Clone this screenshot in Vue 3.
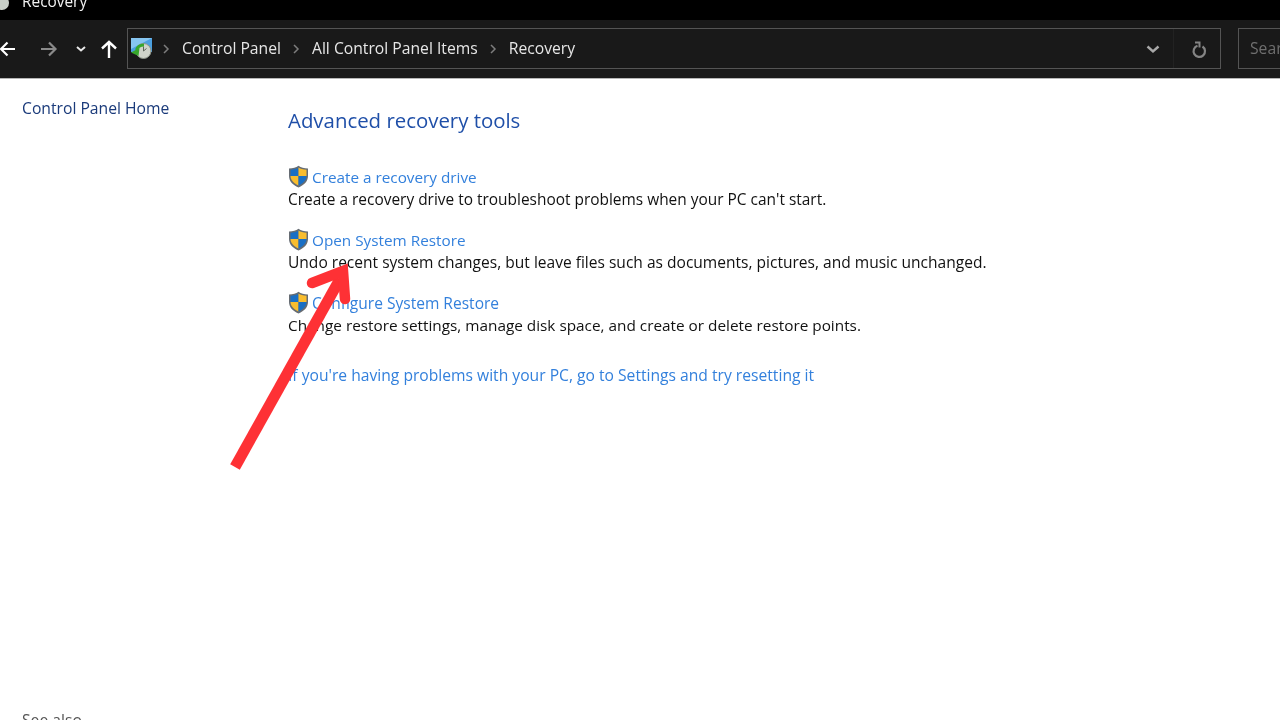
<script setup>
const tasks = [
  { link: 'Create a recovery drive', desc: "Create a recovery drive to troubleshoot problems when your PC can't start." },
  { link: 'Open System Restore', desc: 'Undo recent system changes, but leave files such as documents, pictures, and music unchanged.' },
  { link: 'Configure System Restore', desc: 'Change restore settings, manage disk space, and create or delete restore points.' },
]
const crumbs = ['Control Panel', 'All Control Panel Items', 'Recovery']
</script>

<template>
  <div class="page">
    <div class="titlebar">
      <svg class="title-icon" width="16" height="16" viewBox="0 0 16 16"><circle cx="8" cy="8" r="7" fill="#c9cfc8"/><path d="M2 9a4 4 0 0 1 4-3v3z" fill="#6f9a68"/></svg>
      <span class="title-text">Recovery</span>
    </div>
    <div class="toolbar">
      <div class="nav">
        <svg class="nav-back" width="20" height="20" viewBox="0 0 20 20"><path d="M17 10H3M9.500 3.500 3 10l6.500 6.500" fill="none" stroke="#fff" stroke-width="2.200"/></svg>
        <svg class="nav-fwd" width="20" height="20" viewBox="0 0 20 20"><path d="M2 10h14M10 3.500 16.500 10 10 16.500" fill="none" stroke="#8a8a8a" stroke-width="2.200"/></svg>
        <svg class="nav-drop" width="12" height="12" viewBox="0 0 12 12"><path d="M2 4l4 3.500L10 4" fill="none" stroke="#e8e8e8" stroke-width="2"/></svg>
        <svg class="nav-up" width="20" height="20" viewBox="0 0 20 20"><path d="M10 19V3M3 9.500 10 3l7 6.500" fill="none" stroke="#fff" stroke-width="2.400"/></svg>
      </div>
      <div class="address">
        <svg class="addr-icon" width="24" height="22" viewBox="0 0 24 22">
          <rect x="1" y="0" width="21" height="14" fill="#4b9fe0"/>
          <path d="M1 0h21L1 11z" fill="#86c5f0"/>
          <circle cx="13.500" cy="13" r="7.500" fill="#cfd3c9" stroke="#8d9488"/>
          <path d="M13.500 8.500V13l3-2.500" fill="none" stroke="#5d645a" stroke-width="1"/>
          <path d="M6.500 12C7.500 8.500 10 7 14 7" fill="none" stroke="#37a62c" stroke-width="3"/>
          <path d="M1 14.500 9.500 10 8.500 18z" fill="#37a62c"/>
        </svg>
        <template v-for="c in crumbs" :key="c">
          <svg class="sep" width="8" height="10" viewBox="0 0 8 10"><path d="M2 1l4 4-4 4" fill="none" stroke="#7d7d7d" stroke-width="1.500"/></svg>
          <span class="crumb">{{ c }}</span>
        </template>
        <span class="spacer"></span>
        <svg class="addr-drop" width="16" height="12" viewBox="0 0 16 12"><path d="M2.500 3.500 8 8.500l5.500-5" fill="none" stroke="#a8a8a8" stroke-width="2.400"/></svg>
        <span class="divider"></span>
        <svg class="refresh" width="18" height="18" viewBox="0 0 18 18"><path d="M7.500 4.800A5.700 5.700 0 1 0 12.500 5.500" fill="none" stroke="#858585" stroke-width="2.200"/><path d="M5 1.500h4.500v5" fill="none" stroke="#858585" stroke-width="2"/></svg>
      </div>
      <div class="search"><span>Search Control Panel</span></div>
    </div>
    <div class="body">
      <aside class="side">
        <a class="home">Control Panel Home</a>
        <span class="see">See also</span>
      </aside>
      <main class="main">
        <h1 class="heading">Advanced recovery tools</h1>
        <div class="tasks">
          <div v-for="t in tasks" :key="t.link" class="task">
            <div class="task-head">
              <svg class="shield" width="21" height="23" viewBox="0 0 21 23">
                <path d="M10.500.8C8 2.600 5 3.400 1 3.500V11c0 5 3.500 9 9.500 11.500C16.500 20 20 16 20 11V3.500c-4-.1-7-.9-9.500-2.700z" fill="#666c73"/>
                <path d="M10.500 2.500C8.500 3.900 6 4.500 2.500 4.700V11h8z" fill="#1a6fc4"/>
                <path d="M10.500 2.500c2 1.400 4.500 2 8 2.200V11h-8z" fill="#f9bd2e"/>
                <path d="M2.500 11h8v9.500C6 18.500 2.500 15 2.500 11z" fill="#f9bd2e"/>
                <path d="M18.500 11h-8v9.500c4.500-2 8-5.500 8-9.500z" fill="#1a6fc4"/>
              </svg>
              <a class="link">{{ t.link }}</a>
            </div>
            <p class="desc">{{ t.desc }}</p>
          </div>
        </div>
        <a class="link reset">If you're having problems with your PC, go to Settings and try resetting it</a>
      </main>
    </div>
    <svg class="arrow" width="130" height="215" viewBox="0 0 130 215">
      <path d="M9 208 114 20" fill="none" stroke="#fe3135" stroke-width="11"/>
      <path d="M86 24l31-12 2 28" fill="none" stroke="#fe3135" stroke-width="10.500" stroke-linecap="round" stroke-linejoin="miter"/>
    </svg>
  </div>
</template>

<style scoped>
.page {
  position: relative;
  width: 1280px;
  height: 720px;
  overflow: hidden;
  background: #fff;
  display: flex;
  flex-direction: column;
  font-family: "Open Sans", "Noto Sans", sans-serif;
  filter: blur(0.35px);
}
.titlebar {
  height: 20px;
  background: #000;
  display: flex;
  align-items: flex-end;
  gap: 12px;
  overflow: hidden;
  flex: none;
}
.title-icon { margin-left: -6px; margin-bottom: 9px; flex: none; }
.title-text {
  color: #f2f2f2;
  font-size: 15.400px;
  line-height: 20px;
  margin-bottom: 8px;
}
.toolbar {
  height: 57px;
  padding-bottom: 1px;
  background: #191919;
  border-bottom: 1px solid #b5b5b5;
  box-sizing: content-box;
  display: flex;
  align-items: center;
  flex: none;
}
.nav {
  width: 127px;
  display: flex;
  align-items: center;
  flex: none;
  height: 100%;
}
.nav-back { margin-left: -2px; flex: none; }
.nav-fwd { margin-left: 21px; flex: none; }
.nav-drop { margin-left: 16px; flex: none; }
.nav-up { margin-left: 12px; flex: none; }
.address {
  width: 1094px;
  height: 41px;
  box-sizing: border-box;
  border: 1px solid #545454;
  display: flex;
  align-items: center;
  flex: none;
}
.addr-icon { margin: 0 -3px 0 2px; flex: none; }
.sep { margin: 0 12px 0 11px; flex: none; }
.crumb {
  color: #e6e6e6;
  font-size: 15.700px;
  white-space: nowrap;
  position: relative;
  top: -1px;
}
.spacer { flex: 1; }
.addr-drop { margin-right: 12px; flex: none; }
.divider { width: 1px; height: 100%; background: #222; flex: none; }
.refresh { margin: 2px 12px 0 16px; flex: none; }
.search {
  margin-left: 17px;
  width: 80px;
  height: 41px;
  box-sizing: border-box;
  border: 1px solid #545454;
  display: flex;
  align-items: center;
  padding-left: 11px;
  color: #6f6f6f;
  font-size: 15.700px;
  white-space: nowrap;
  overflow: hidden;
  flex: none;
}
.search span { position: relative; top: -1px; }
.body {
  flex: 1;
  display: flex;
  min-height: 0;
}
.side {
  width: 288px;
  box-sizing: border-box;
  padding: 19px 0 0 22px;
  display: flex;
  flex-direction: column;
  justify-content: space-between;
  margin-bottom: -11px;
  flex: none;
}
.home {
  color: #1a3a7a;
  font-size: 15.700px;
  line-height: 21px;
}
.see {
  color: #555;
  font-size: 15.700px;
  line-height: 21px;
}
.main { flex: 1; padding-top: 26px; }
.heading {
  margin: 0;
  color: #1f4fa8;
  font-size: 20.400px;
  font-weight: 400;
  line-height: 30px;
}
.tasks {
  margin-top: 31px;
  display: flex;
  flex-direction: column;
  gap: 19px;
}
.task-head {
  display: flex;
  align-items: center;
  height: 22px;
}
.shield { margin: -2px 3px 0 0; flex: none; }
.link {
  color: #3380dc;
  font-size: 15.300px;
  line-height: 21px;
}
.desc {
  margin: 1px 0 0;
  color: #111;
  font-size: 15.450px;
  line-height: 21px;
}
.task:nth-child(2) .desc { font-size: 15.550px; }
.task:nth-child(3) .desc { font-size: 15.330px; }
.task:nth-child(3) .link { font-size: 15.550px; }
.reset { display: block; margin-top: 29px; font-size: 15.650px; }
.arrow {
  position: absolute;
  left: 226px;
  top: 259px;
}
</style>
